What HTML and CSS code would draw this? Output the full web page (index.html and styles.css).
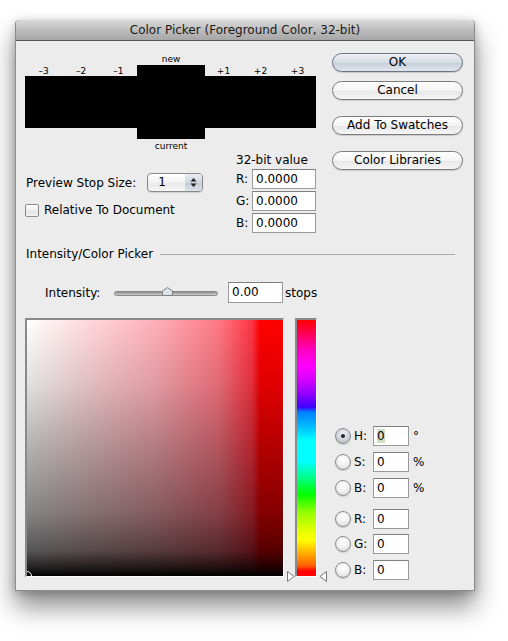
FILE: index.html
```html
<!DOCTYPE html>
<html>
<head>
<meta charset="utf-8">
<link rel="stylesheet" href="styles.css">
</head>
<body>
<div class="window">
  <div class="titlebar">Color Picker (Foreground Color, 32-bit)</div>
  <div class="content">
    <div class="top">
      <div class="left">
        <div class="preview">
          <div class="band band-left">
            <div class="ticks"><span>–3</span><span>–2</span><span>–1</span></div>
            <div class="swatch side"></div>
          </div>
          <div class="center">
            <div class="cap">new</div>
            <div class="swatch mid"></div>
            <div class="cap cap-bottom">current</div>
          </div>
          <div class="band band-right">
            <div class="ticks"><span>+1</span><span>+2</span><span>+3</span></div>
            <div class="swatch side"></div>
          </div>
        </div>
        <div class="settings">
          <div class="opts">
            <div class="stoprow">
              <span>Preview Stop Size:</span>
              <div class="stepper">
                <span class="stepval">1</span>
                <span class="arrows">
                  <svg width="7" height="11" viewBox="0 0 7 11"><path d="M3.5 1 L6.5 4.5 L0.5 4.5 Z" fill="#222"/><path d="M3.5 10 L6.5 6.5 L0.5 6.5 Z" fill="#222"/></svg>
                </span>
              </div>
            </div>
            <div class="check"><span class="box"></span><span>Relative To Document</span></div>
          </div>
          <div class="values">
            <div class="vtitle">32-bit value</div>
            <div class="vrow"><span class="vlab">R:</span><span class="input vin">0.0000</span></div>
            <div class="vrow"><span class="vlab">G:</span><span class="input vin">0.0000</span></div>
            <div class="vrow"><span class="vlab">B:</span><span class="input vin">0.0000</span></div>
          </div>
        </div>
      </div>
      <div class="buttons">
        <div class="btn btn-default">OK</div>
        <div class="btn btn-cancel">Cancel</div>
        <div class="btn btn-gap">Add To Swatches</div>
        <div class="btn btn-gap">Color Libraries</div>
      </div>
    </div>

    <div class="section-head"><span>Intensity/Color Picker</span><span class="rule"></span></div>

    <div class="intensity">
      <span class="ilabel">Intensity:</span>
      <div class="slider">
        <div class="track"></div>
        <svg class="thumb" width="11" height="9" viewBox="0 0 11 9"><path d="M5.5 0.5 L10.5 4 L10.5 8.5 L0.5 8.5 L0.5 4 Z" fill="#dfe3e8" stroke="#7a7f86"/></svg>
      </div>
      <span class="input iin">0.00</span>
      <span class="stops">stops</span>
    </div>

    <div class="picker">
      <div class="field">
        <div class="field-inner"><span class="marker"></span></div>
      </div>
      <div class="huewrap">
        <div class="hue"><div class="hue-inner"></div></div>
        <svg class="tri tri-left" width="8" height="11" viewBox="0 0 8 11"><path d="M0.5 0.5 L7 5.5 L0.5 10.5 Z" fill="#fff" stroke="#777"/></svg>
        <svg class="tri tri-right" width="8" height="11" viewBox="0 0 8 11"><path d="M7.5 0.5 L1 5.5 L7.5 10.5 Z" fill="#fff" stroke="#777"/></svg>
      </div>
      <div class="modes">
        <div class="mrow"><span class="radio on"></span><span class="mlab">H:</span><span class="input min"><span class="sel">0</span></span><span class="unit">°</span></div>
        <div class="mrow"><span class="radio"></span><span class="mlab">S:</span><span class="input min">0</span><span class="unit">%</span></div>
        <div class="mrow"><span class="radio"></span><span class="mlab">B:</span><span class="input min">0</span><span class="unit">%</span></div>
        <div class="mrow rgb-first"><span class="radio"></span><span class="mlab">R:</span><span class="input min">0</span></div>
        <div class="mrow rgb-g"><span class="radio"></span><span class="mlab">G:</span><span class="input min">0</span></div>
        <div class="mrow"><span class="radio"></span><span class="mlab">B:</span><span class="input min">0</span></div>
      </div>
    </div>
  </div>
</div>
</body>
</html>
```

FILE: styles.css
```css
* { box-sizing: border-box; }
html, body { margin: 0; padding: 0; background: #fff; min-height: 100%; }
body {
  font-family: "DejaVu Sans", "Liberation Sans", sans-serif;
  font-size: 12px;
  color: #000;
  padding: 20px 0 50px 15px;
}
.window {
  width: 460px;
  height: 571px;
  background: #ececec;
  border: 1px solid #8c8c8c;
  border-top: none;
  border-radius: 4px 4px 0 0;
  box-shadow: 0 16px 26px rgba(0,0,0,0.45), 0 2px 10px rgba(0,0,0,0.22);
  overflow: hidden;
}
.titlebar {
  height: 21px;
  line-height: 20px;
  text-align: center;
  font-size: 12px;
  color: #1a1a1a;
  background: linear-gradient(#d8d8d8, #b8b8b8 60%, #a6a6a6);
  border-bottom: 1px solid #555;
  border-radius: 4px 4px 0 0;
}
.content {
  padding: 12px 10px 0 9px;
}
.top { display: flex; }
.left { width: 291px; }
.preview { display: flex; align-items: flex-start; margin-top: 1px; }
.band-left { width: 112px; margin-top: 12px; }
.band-right { width: 111px; margin-top: 12px; }
.ticks { display: flex; height: 10px; font-size: 9px; line-height: 10px; }
.ticks span { flex: 1; text-align: center; }
.swatch { background: #000; }
.side { height: 52px; }
.center { width: 68px; }
.mid { height: 74px; }
.cap { font-size: 9px; line-height: 11px; height: 11px; text-align: center; }
.cap-bottom { margin-top: 2px; }

.settings { display: flex; }
.opts { width: 211px; padding-top: 21px; }
.stoprow { display: flex; align-items: center; height: 19px; padding-left: 1px; }
.stepper {
  margin-left: 11px;
  width: 56px;
  height: 19px;
  border: 1px solid #8a8a8a;
  border-radius: 4px;
  background: linear-gradient(#fff, #f1f1f1 50%, #e7e7e7 51%, #f6f6f6);
  display: flex;
  box-shadow: 0 1px 1px rgba(0,0,0,0.12);
}
.stepval { flex: 1; padding-left: 10px; line-height: 17px; }
.arrows {
  width: 17px;
  display: flex; align-items: center; justify-content: center;
  background: linear-gradient(#e8ecf2, #cfd6df 50%, #c3cbd6 51%, #dce2ea);
  border-radius: 0 3px 3px 0;
}
.check { display: flex; align-items: center; margin-top: 11px; height: 14px; }
.box {
  width: 14px; height: 13px;
  border: 1px solid #8a8a8a;
  border-radius: 2px;
  background: linear-gradient(#fff, #f0f0f0 50%, #e2e2e2 51%, #f3f3f3);
  margin-right: 5px;
}
.values { width: 80px; }
.vtitle { margin-top: 1px; line-height: 15px; height: 15px; }
.vrow { display: flex; align-items: center; height: 20px; margin-top: 2px; }
.vrow:nth-child(2) { margin-top: 1px; }
.vlab { width: 16px; }
.input {
  background: #fff;
  border: 1px solid #9a9a9a;
  border-top-color: #7f7f7f;
  height: 20px;
  line-height: 18px;
  padding-left: 3px;
  font-size: 12px;
}
.vin { width: 64px; }

.buttons { margin-left: 16px; width: 131px; }
.btn {
  height: 19px;
  line-height: 17px;
  text-align: center;
  border: 1px solid #7c7c7c;
  border-radius: 10px;
  background: linear-gradient(#ffffff, #f4f4f4 50%, #e6e6e6 51%, #f5f5f5);
  box-shadow: 0 1px 1px rgba(0,0,0,0.15);
}
.btn-default {
  border-color: #6b7583;
  background: linear-gradient(#eef1f5, #d6dce4 50%, #c6ced9 51%, #e0e5ec);
}
.btn-cancel { margin-top: 9px; }
.btn-gap { margin-top: 16px; }

.section-head { display: flex; align-items: center; margin-top: 14px; height: 14px; line-height: 14px; padding-left: 1px; }
.rule { flex: 1; height: 1px; background: #a8a8a8; margin: 0 9px 0 7px; }

.intensity { display: flex; align-items: center; margin-top: 21px; height: 21px; padding-left: 20px; }
.ilabel { width: 69px; }
.slider { position: relative; width: 104px; height: 21px; }
.track {
  position: absolute; left: 0; right: 0; top: 9px; height: 5px;
  border-radius: 3px;
  background: linear-gradient(#8a8a8a, #b5b5b5 60%, #d0d0d0);
  border: 1px solid #8a8a8a;
}
.thumb { position: absolute; left: 48px; top: 5px; }
.iin { width: 55px; height: 21px; margin-left: 10px; line-height: 19px; }
.stops { margin-left: 2px; }

.picker { display: flex; align-items: flex-start; margin-top: 15px; }
.field {
  width: 259px; height: 259px;
  border-top: 2px solid #8a8a8a;
  border-left: 2px solid #8a8a8a;
  border-right: 1px solid #fff;
  border-bottom: 1px solid #fff;
}
.field-inner {
  position: relative;
  overflow: hidden;
  width: 256px; height: 256px;
  background:
    linear-gradient(to bottom, rgba(0,0,0,0) 0%, rgba(0,0,0,0.12) 25%, rgba(0,0,0,0.3) 50%, rgba(0,0,0,0.48) 75%, rgba(0,0,0,0.66) 90%, rgba(0,0,0,0.88) 97%, #000 100%),
    linear-gradient(to right, #ffffff 0%, #ffd6da 25%, #ffb0b8 50%, #ff7884 75%, #ff3444 88%, #ff0000 91%, #ff0000 100%);
}
.marker {
  position: absolute; left: -5px; bottom: -5px;
  width: 10px; height: 10px;
  border: 1px solid #fff; border-radius: 50%;
}
.huewrap { position: relative; margin-left: 11px; }
.hue {
  width: 22px; height: 259px;
  border-top: 2px solid #8a8a8a;
  border-left: 2px solid #8a8a8a;
  border-right: 1px solid #fff;
  border-bottom: 1px solid #fff;
}
.hue-inner {
  width: 19px; height: 256px;
  background: linear-gradient(to bottom,
    #ff0000 0%, #ff0050 5%, #ff00c8 12%, #ff00ff 18%, #d000ff 24%, #9000ff 29%, #4000ff 34%,
    #0080ff 36%, #00c0ff 42%, #00ffff 47%, #00ffff 55%, #00ff80 62%, #00ff00 68%,
    #90ff00 75%, #e0ff00 82%, #ffff00 86%, #ffb000 91%, #ff6000 96%, #ff0000 98%, #ff0000 100%);
}
.tri { position: absolute; top: 253px; }
.tri-left { left: -8px; }
.tri-right { left: 24px; }

.modes { margin-left: 18px; margin-top: 108px; }
.mrow { display: flex; align-items: center; height: 20px; margin-top: 6px; }
.mrow:first-child { margin-top: 0; }
.mrow.rgb-first { margin-top: 11px; }
.mrow.rgb-g { margin-top: 5px; }
.radio {
  width: 16px; height: 16px; border-radius: 50%;
  border: 1px solid #8a8a8a;
  background: radial-gradient(circle at 50% 35%, #ffffff 0%, #f2f2f2 45%, #d2d2d2 100%);
  box-shadow: 0 1px 1px rgba(0,0,0,0.15);
  position: relative;
}
.radio.on {
  background: radial-gradient(circle at 50% 35%, #f0f2f5 0%, #c9ced6 60%, #a9b0ba 100%);
}
.radio.on::after {
  content: ""; position: absolute; left: 5px; top: 5px;
  width: 4px; height: 4px; border-radius: 50%; background: #222;
}
.mlab { width: 19px; margin-left: 3px; }
.min { width: 36px; }
.sel { background: #cfe0c6; }
.unit { margin-left: 4px; }
```
